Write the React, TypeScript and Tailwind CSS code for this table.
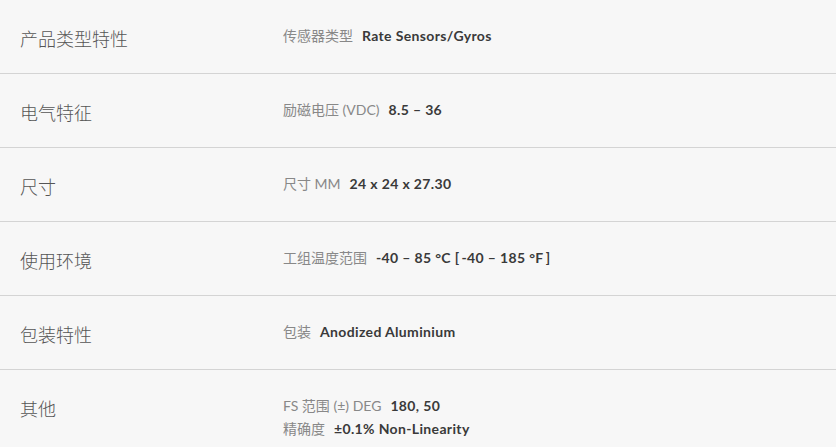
import React from "react";

const rows: { title: string; items: [string, string][] }[] = [
  { title: "产品类型特性", items: [["传感器类型", "Rate Sensors/Gyros"]] },
  { title: "电气特征", items: [["励磁电压 (VDC)", "8.5 – 36"]] },
  { title: "尺寸", items: [["尺寸 MM", "24 x 24 x 27.30"]] },
  { title: "使用环境", items: [["工组温度范围", "-40 – 85 °C [\u2009-40 – 185 °F\u2009]"]] },
  { title: "包装特性", items: [["包装", "Anodized Aluminium"]] },
  {
    title: "其他",
    items: [
      ["FS 范围 (±) DEG", "180, 50"],
      ["精确度", "±0.1% Non-Linearity"],
    ],
  },
];

export default function App() {
  return (
    <div
      className="w-[836px] h-[447px] overflow-hidden bg-[#f7f7f7]"
      style={{ fontFamily: "Lato, 'Noto Sans CJK SC', sans-serif" }}
    >
      {rows.map((r, i) => (
        <div
          key={i}
          className={`flex ${i < rows.length - 1 ? "h-[74px] border-b border-[#d4d4d4]" : "h-[78px]"}`}
        >
          <div className="w-[283px] shrink-0 pl-[20px] pt-[26px] text-[18px] leading-[26px] font-light text-[#555]">
            {r.title}
          </div>
          <div className="pt-[24px]">
            {r.items.map(([k, v], j) => (
              <div key={j} className="text-[14px] leading-[23px] whitespace-pre">
                <span className="text-[#888] mr-[9px]">{k}</span>
                <span className="font-bold text-[#3a3a3a] tracking-[0.35px]">{v}</span>
              </div>
            ))}
          </div>
        </div>
      ))}
    </div>
  );
}
